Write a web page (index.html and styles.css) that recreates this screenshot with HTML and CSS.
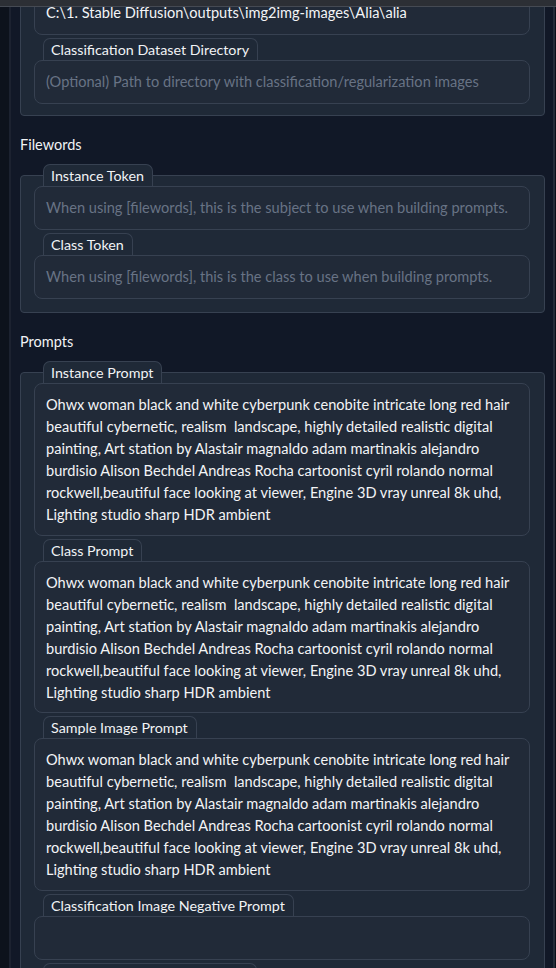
FILE: index.html
```html
<!DOCTYPE html>
<html lang="en">
<head>
  <meta charset="UTF-8" />
  <meta name="viewport" content="width=device-width, initial-scale=1.0"/>
  <title>Dreambooth - Concepts</title>
  <link rel="stylesheet" href="styles.css">
</head>
<body>

  <div class="topbar"></div>

  <div class="layout">
    <div class="rail"></div>

    <div class="main">

      <!-- directories -->
      <div class="panel first">
        <div class="field">
          <span class="label">Dataset Directory</span>
          <div class="input">C:\1. Stable Diffusion\outputs\img2img-images\Alia\alia</div>
        </div>
        <div class="field">
          <span class="label">Classification Dataset Directory</span>
          <div class="input empty">(Optional) Path to directory with classification/regularization images</div>
        </div>
      </div>

      <!-- filewords -->
      <h3 class="section">Filewords</h3>
      <div class="panel">
        <div class="field">
          <span class="label">Instance Token</span>
          <div class="input empty">When using [filewords], this is the subject to use when building prompts.</div>
        </div>
        <div class="field">
          <span class="label">Class Token</span>
          <div class="input empty">When using [filewords], this is the class to use when building prompts.</div>
        </div>
      </div>

      <!-- prompts -->
      <h3 class="section">Prompts</h3>
      <div class="panel">
        <div class="field">
          <span class="label">Instance Prompt</span>
          <div class="input text">Ohwx woman black and white cyberpunk cenobite intricate long red hair<br>beautiful cybernetic, realism&nbsp; landscape, highly detailed realistic digital<br>painting, Art station by Alastair magnaldo adam martinakis alejandro<br>burdisio Alison Bechdel Andreas Rocha cartoonist cyril rolando normal<br>rockwell,beautiful face looking at viewer, Engine 3D vray unreal 8k uhd,<br>Lighting studio sharp HDR ambient</div>
        </div>
        <div class="field">
          <span class="label">Class Prompt</span>
          <div class="input text">Ohwx woman black and white cyberpunk cenobite intricate long red hair<br>beautiful cybernetic, realism&nbsp; landscape, highly detailed realistic digital<br>painting, Art station by Alastair magnaldo adam martinakis alejandro<br>burdisio Alison Bechdel Andreas Rocha cartoonist cyril rolando normal<br>rockwell,beautiful face looking at viewer, Engine 3D vray unreal 8k uhd,<br>Lighting studio sharp HDR ambient</div>
        </div>
        <div class="field">
          <span class="label">Sample Image Prompt</span>
          <div class="input text">Ohwx woman black and white cyberpunk cenobite intricate long red hair<br>beautiful cybernetic, realism&nbsp; landscape, highly detailed realistic digital<br>painting, Art station by Alastair magnaldo adam martinakis alejandro<br>burdisio Alison Bechdel Andreas Rocha cartoonist cyril rolando normal<br>rockwell,beautiful face looking at viewer, Engine 3D vray unreal 8k uhd,<br>Lighting studio sharp HDR ambient</div>
        </div>
        <div class="field">
          <span class="label">Classification Image Negative Prompt</span>
          <div class="input">&nbsp;</div>
        </div>
        <div class="field">
          <span class="label">Sample Image Negative Prompt</span>
          <div class="input">&nbsp;</div>
        </div>
      </div>

    </div>

    <div class="scroll-edge"></div>
  </div>

</body>
</html>
```

FILE: styles.css
```css
/*── base ──*/
body {
  margin: 0;
  height: 968px;
  overflow: hidden;
  background: #111827;
  color: #e5e7eb;
  font-family: Lato, "Noto Sans", sans-serif;
  font-size: 14.6px;
}
.topbar {
  position: fixed;
  top: 0;
  left: 0;
  right: 0;
  height: 6px;
  background: #2c2f35;
  border-bottom: 1px solid #454a53;
  z-index: 10;
}
.layout {
  display: flex;
  min-height: 968px;
}
.rail {
  flex-shrink: 0;
  width: 9px;
  background: #0d121c;
  border-right: 2px solid #1c2230;
}
.main {
  flex: 1;
  min-width: 0;
  padding: 0 8px 0 9px;
}
.scroll-edge {
  flex-shrink: 0;
  width: 1px;
  background: #0b0f19;
  border-left: 2px solid #252c39;
}

/*── panels ──*/
.panel {
  background: #1f2937;
  border: 1px solid #374151;
  border-radius: 4px;
  padding: 0 14px 13px 13px;
}
.panel.first {
  margin-top: -20px;
  padding-bottom: 11px;
}
.section {
  margin: 19px 0 20px;
  font-size: 14.5px;
  font-weight: 400;
  line-height: 20px;
  color: #f1f3f5;
}

/*── fields ──*/
.field {
  display: flex;
  flex-direction: column;
  align-items: flex-start;
  margin-top: 3px;
}
.field:first-child {
  margin-top: -12px;
}
.label {
  margin-left: 9px;
  height: 21px;
  line-height: 21px;
  padding: 0 8px 0 7px;
  background: #1f2937;
  border: 1px solid #374151;
  border-bottom: none;
  border-radius: 7px 7px 0 0;
  font-size: 14.3px;
  color: #f1f3f5;
}
.input {
  align-self: stretch;
  background: #212a38;
  border: 1px solid #374151;
  border-radius: 8px;
  padding: 10px 11px;
  line-height: 22px;
  color: #f3f4f6;
  white-space: nowrap;
  overflow: hidden;
}
.input.text {
  padding-bottom: 8.5px;
}
.input.empty {
  color: #687385;
}
```
